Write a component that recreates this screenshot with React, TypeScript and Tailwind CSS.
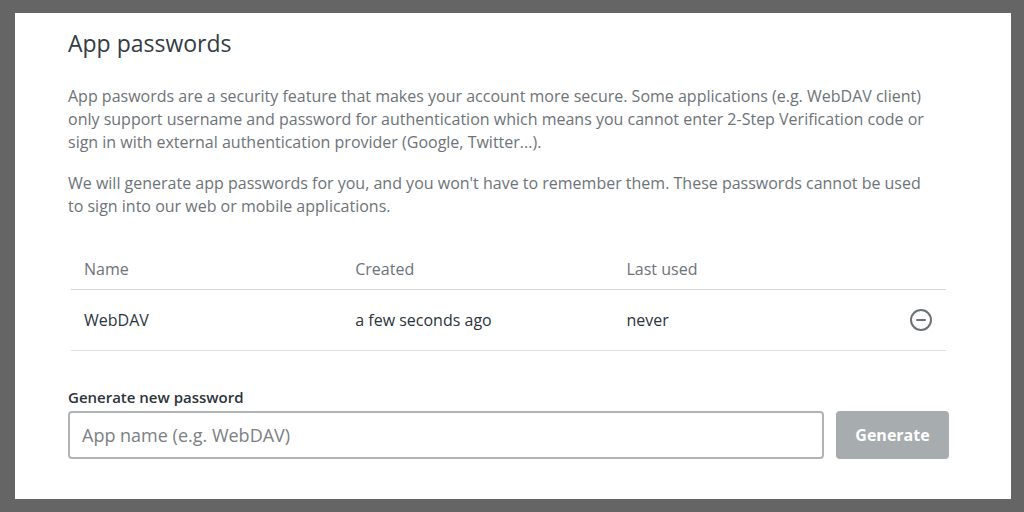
import React from "react";
import { CircleMinus } from "lucide-react";

const passwords = [
  { name: "WebDAV", created: "a few seconds ago", lastUsed: "never" },
];

function PasswordTable() {
  return (
    <div className="px-[3px]">
      <table className="w-full table-fixed text-left text-base">
        <thead>
          <tr className="h-10 border-b border-[#d6d8d9] text-[#6d7378]">
            <th className="w-[31%] px-[13px] font-normal">Name</th>
            <th className="w-[31%] px-[13px] font-normal">Created</th>
            <th className="px-[13px] font-normal">Last used</th>
            <td className="w-16"></td>
          </tr>
        </thead>
        <tbody>
          {passwords.map((item) => (
            <tr
              key={item.name}
              className="h-[61px] border-b border-[#dfe0e1] text-[#2c343c]"
            >
              <td className="px-[13px]">{item.name}</td>
              <td className="px-[13px]">{item.created}</td>
              <td className="px-[13px]">{item.lastUsed}</td>
              <td className="px-[13px]">
                <button
                  type="button"
                  aria-label="Remove password"
                  className="ml-auto block text-[#6b7377]"
                >
                  <CircleMinus size={24} strokeWidth={2} />
                </button>
              </td>
            </tr>
          ))}
        </tbody>
      </table>
    </div>
  );
}

export default function App() {
  return (
    <div className="min-h-screen bg-[#656565] pt-[13px] pr-[13px] pb-[13px] pl-[15px] font-['Open_Sans',sans-serif]">
      <main className="bg-white pt-4 pr-[62px] pb-10 pl-[53px]">
        <h1 className="mb-7 text-[23px] leading-7 text-[#343c44]">
          App passwords
        </h1>
        <div className="flex flex-col gap-[18px] pr-3 text-base leading-[23px] text-[#6d7378]">
          <p>
            App paswords are a security feature that makes your account more
            secure. Some applications (e.g. WebDAV client) only support username
            and password for authentication which means you cannot enter 2-Step
            Verification code or sign in with external authentication provider
            (Google, Twitter...).
          </p>
          <p>
            We will generate app passwords for you, and you won't have to
            remember them. These passwords cannot be used to sign into our web
            or mobile applications.
          </p>
        </div>
        <div className="mt-[31px] mb-9">
          <PasswordTable />
        </div>
        <form>
          <label
            htmlFor="app-name"
            className="mb-1 block text-[15px] leading-5 font-semibold text-[#2c343c]"
          >
            Generate new password
          </label>
          <div className="flex gap-3">
            <input
              id="app-name"
              type="text"
              placeholder="App name (e.g. WebDAV)"
              className="h-12 min-w-0 flex-1 rounded-sm border-2 border-[#b0b4b7] px-3 text-lg text-[#2c343c] placeholder:text-[#7b8083]"
            />
            <button
              type="button"
              className="h-12 w-[113px] rounded-sm bg-[#a7acae] text-base font-bold text-white"
            >
              Generate
            </button>
          </div>
        </form>
      </main>
    </div>
  );
}
